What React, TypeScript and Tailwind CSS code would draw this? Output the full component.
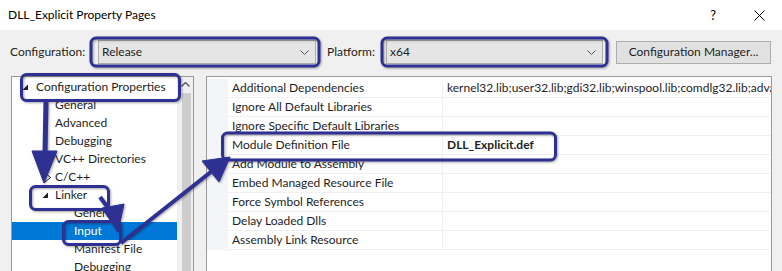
const NAVY = "#2e3192";

type TreeItem = { label: string; level: number; expander?: "open" | "closed"; selected?: boolean };

const treeItems: TreeItem[] = [
  { label: "Configuration Properties", level: 0, expander: "open" },
  { label: "General", level: 1 },
  { label: "Advanced", level: 1 },
  { label: "Debugging", level: 1 },
  { label: "VC++ Directories", level: 1 },
  { label: "C/C++", level: 1, expander: "closed" },
  { label: "Linker", level: 1, expander: "open" },
  { label: "General", level: 2 },
  { label: "Input", level: 2, selected: true },
  { label: "Manifest File", level: 2 },
  { label: "Debugging", level: 2 },
];

const props: { name: string; value?: string; bold?: boolean }[] = [
  { name: "Additional Dependencies", value: "kernel32.lib;user32.lib;gdi32.lib;winspool.lib;comdlg32.lib;advapi32.lib;shell32.lib" },
  { name: "Ignore All Default Libraries" },
  { name: "Ignore Specific Default Libraries" },
  { name: "Module Definition File", value: "DLL_Explicit.def", bold: true },
  { name: "Add Module to Assembly" },
  { name: "Embed Managed Resource File" },
  { name: "Force Symbol References" },
  { name: "Delay Loaded Dlls" },
  { name: "Assembly Link Resource" },
];

function Chevron() {
  return (
    <svg width="9" height="5" viewBox="0 0 9 5" className="shrink-0">
      <polyline points="0.5,0.5 4.5,4.5 8.5,0.5" fill="none" stroke="#555" strokeWidth="1" />
    </svg>
  );
}

function Select({ value, width }: { value: string; width: string }) {
  return (
    <div className={`${width} flex h-[24px] items-center justify-between border border-[#adadad] bg-[#e5e5e5] pl-[3px] pr-[6px]`}>
      <span>{value}</span>
      <Chevron />
    </div>
  );
}

function Expander({ kind }: { kind: "open" | "closed" }) {
  if (kind === "open") {
    return (
      <svg width="7" height="7" viewBox="0 0 7 7">
        <polygon points="6,0.5 6,6 0.5,6" fill="#1e1e1e" />
      </svg>
    );
  }
  return (
    <svg width="7" height="11" viewBox="0 0 7 11" className="ml-[2px]">
      <polygon points="0.5,0.5 6.5,5.5 0.5,10.5" fill="none" stroke="#1e1e1e" strokeWidth="1" />
    </svg>
  );
}

function Overlay() {
  return (
    <svg
      width="782"
      height="271"
      viewBox="0 0 782 271"
      className="pointer-events-none absolute left-0 top-0 drop-shadow-[1px_1px_1px_rgba(0,0,0,0.35)]"
    >
      <g fill="none" stroke={NAVY} strokeWidth="3">
        <rect x="91" y="38" width="228" height="28" rx="5" />
        <rect x="382" y="38" width="225" height="28" rx="5" />
        <rect x="21.5" y="74.5" width="158" height="26" rx="5" />
        <rect x="30.5" y="186.5" width="78" height="23" rx="5" />
        <rect x="63.5" y="221.5" width="57" height="23" rx="5" />
        <rect x="222.5" y="133" width="333" height="27" rx="5" />
      </g>
      <g fill={NAVY} stroke={NAVY}>
        {/* config properties -> linker */}
        <line x1="46" y1="101" x2="45" y2="154" strokeWidth="5" />
        <polygon points="32,151 57,151 44,183" strokeWidth="1" />
        {/* linker -> input */}
        <line x1="100" y1="197" x2="111" y2="212" strokeWidth="4" />
        <polygon points="102,208 124,204 118,232" strokeWidth="1" />
        {/* input -> module definition file */}
        <line x1="121" y1="243" x2="212" y2="171" strokeWidth="4" />
        <polygon points="230,157 219,182 202,161" strokeWidth="1" />
      </g>
    </svg>
  );
}

export default function App() {
  return (
    <div className="relative h-[271px] w-[782px] overflow-hidden bg-[#f0f0f0] font-['Lato',sans-serif] text-[12px] leading-none text-[#1e1e1e]">
      {/* Title bar */}
      <div className="flex h-[30px] items-center bg-white pl-[8px]">
        <span className="text-black">DLL_Explicit Property Pages</span>
        <span className="ml-auto mr-[38px] text-[13px] text-black">?</span>
        <svg width="11" height="11" viewBox="0 0 11 11" className="mr-[17px]">
          <path d="M0.5 0.5 L10.5 10.5 M10.5 0.5 L0.5 10.5" stroke="#000" strokeWidth="1" />
        </svg>
      </div>

      {/* Configuration row */}
      <div className="flex items-center pl-[10px] pt-[10px]">
        <span className="w-[88px]">Configuration:</span>
        <Select value="Release" width="w-[218px]" />
        <span className="ml-[11px] w-[59px]">Platform:</span>
        <Select value="x64" width="w-[217px]" />
        <div className="ml-[13px] flex h-[23px] w-[155px] items-center justify-center border border-[#adadad] bg-[#e1e1e1]">
          Configuration Manager...
        </div>
      </div>

      {/* Main area */}
      <div className="mt-[12px] flex pl-[11px]">
        {/* Tree */}
        <div className="flex h-[210px] w-[183px] border border-[#9a9a9a] bg-white">
          <div className="w-[165px] pt-[1px]">
            {treeItems.map((item, i) => (
              <div
                key={i}
                className={`relative flex h-[18px] items-center ${item.selected ? "bg-[#0078d7] text-white" : ""}`}
              >
                {item.expander && (
                  <span
                    className={`absolute flex items-center ${item.level === 0 ? "left-[10px]" : "left-[30px]"}`}
                  >
                    <Expander kind={item.expander} />
                  </span>
                )}
                <span className={item.level === 0 ? "pl-[24px]" : item.level === 1 ? "pl-[43px]" : "pl-[62px]"}>
                  {item.label}
                </span>
              </div>
            ))}
          </div>
          <div className="flex w-[16px] flex-col bg-[#f0f0f0]">
            <div className="flex h-[17px] items-center justify-center">
              <svg width="9" height="5" viewBox="0 0 9 5">
                <polyline points="0.5,4.5 4.5,0.5 8.5,4.5" fill="none" stroke="#606060" strokeWidth="1.5" />
              </svg>
            </div>
            <div className="ml-[5px] h-full w-[9px] bg-[#cdcdcd]" />
          </div>
        </div>

        {/* Property grid */}
        <div className="ml-[12px] h-[210px] w-[566px] overflow-hidden border border-[#9a9a9a] bg-white pt-[2px]">
          {props.map((p, i) => (
            <div key={i} className="flex h-[19px]">
              <div className="w-[21px] shrink-0 bg-[#f4f5f9]" />
              <div className="flex w-[214px] shrink-0 items-center border-b border-[#f0f0f0] pl-[4px]">{p.name}</div>
              <div
                className={`flex min-w-0 flex-1 items-center overflow-hidden whitespace-nowrap border-b border-l border-[#f0f0f0] pl-[4px] ${p.bold ? "font-bold" : ""}`}
              >
                {p.value}
              </div>
            </div>
          ))}
        </div>
      </div>

      <Overlay />
    </div>
  );
}
